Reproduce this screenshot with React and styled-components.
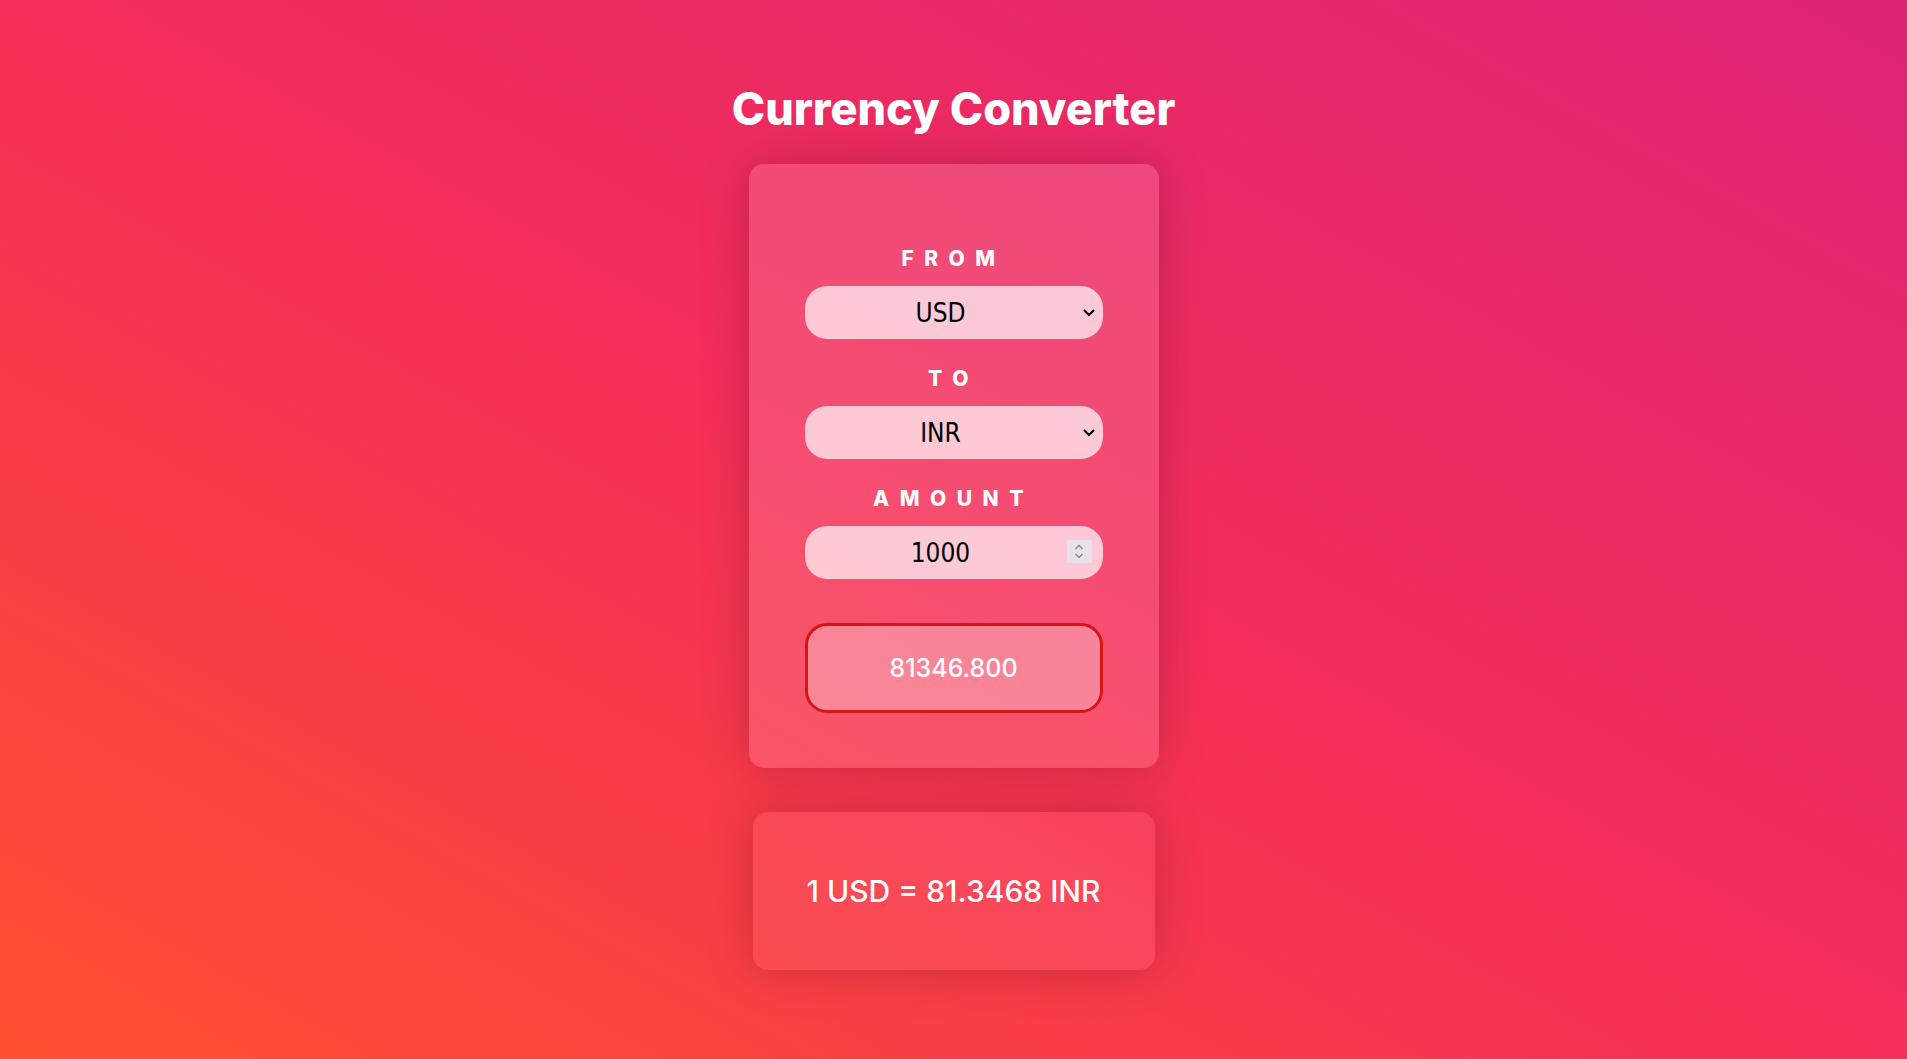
import React, { useState } from 'react';
import styled, { createGlobalStyle } from 'styled-components';

const GlobalStyle = createGlobalStyle`
    * { box-sizing: border-box; }
    html, body { margin: 0; padding: 0; }
    body { font-family: Inter, "Noto Sans", sans-serif; }
`;

const rates = { USD: 1, INR: 81.3468, EUR: 0.9712, GBP: 0.8341, JPY: 144.62 };

const Page = styled.div`
    min-height: 100vh;
    display: flex;
    flex-direction: column;
    align-items: center;
    padding-top: 82px;
    background: linear-gradient(to top right, #ff4f2f, #f52e58 50%, #dd2476);
`;

const Title = styled.h1`
    margin: 0 0 28px;
    font-size: 45px;
    line-height: 54px;
    font-weight: 800;
    color: #fff;
`;

const Card = styled.div`
    width: 410px;
    padding: 83px 0 55px;
    display: flex;
    flex-direction: column;
    align-items: center;
    background: rgba(255, 255, 255, 0.15);
    border-radius: 15px;
    box-shadow: 0 0 50px rgba(0, 0, 0, 0.2);
`;

const Fields = styled.div`
    display: flex;
    flex-direction: column;
    gap: 28px;
`;

const Field = styled.div`
    display: flex;
    flex-direction: column;
    align-items: center;
    gap: 15px;
`;

const Label = styled.label`
    font-size: 21px;
    line-height: 24px;
    font-weight: 800;
    letter-spacing: 10.5px;
    color: #fff;
`;

const Control = styled.div`
    position: relative;
    width: 298px;
    height: 53px;
`;

const fieldBase = `
    width: 100%;
    height: 100%;
    border: 0;
    outline: none;
    border-radius: 22px;
    background: rgba(255, 255, 255, 0.7);
    color: #000;
    font-family: "DejaVu Sans Condensed", "DejaVu Sans", sans-serif;
    font-size: 26px;
    text-align: center;
    padding: 0 26px 0 0;
`;

const Select = styled.select`
    ${fieldBase}
    appearance: none;
    -webkit-appearance: none;
    text-align-last: center;
`;

const NumberInput = styled.input`
    ${fieldBase}
    -moz-appearance: textfield;
    &::-webkit-inner-spin-button,
    &::-webkit-outer-spin-button {
        -webkit-appearance: none;
        margin: 0;
    }
`;

const Chevron = styled.svg`
    position: absolute;
    right: 7px;
    top: 50%;
    transform: translateY(-50%);
    pointer-events: none;
`;

const Spinner = styled.div`
    position: absolute;
    right: 11px;
    top: 14px;
    width: 25px;
    height: 23px;
    background: #e6e2ea;
    display: flex;
    flex-direction: column;
    align-items: center;
    justify-content: center;
    gap: 3px;
    pointer-events: none;
`;

const Result = styled.div`
    margin-top: 44px;
    width: 298px;
    height: 90px;
    border: 3px solid #d41616;
    border-radius: 22px;
    background: rgba(255, 255, 255, 0.3);
    display: flex;
    align-items: center;
    justify-content: center;
    color: #fff;
    font-size: 25px;
    font-weight: 500;
`;

const RateCard = styled.div`
    margin-top: 44px;
    width: 402px;
    height: 158px;
    border-radius: 15px;
    background: rgba(255, 255, 255, 0.08);
    box-shadow: 0 0 50px rgba(0, 0, 0, 0.2);
    display: flex;
    align-items: center;
    justify-content: center;
    color: #fff;
    font-size: 30px;
    font-weight: 500;
`;

const Arrow = () => (
    <Chevron width="14" height="10" viewBox="0 0 14 10">
        <polyline points="2,2 7,7 12,2" fill="none" stroke="#000" strokeWidth="2" />
    </Chevron>
);

const CurrencySelect = ({ value, onChange }) => (
    <Control>
        <Select value={value} onChange={(e) => onChange(e.target.value)}>
            {Object.keys(rates).map((c) => <option key={c} value={c}>{c}</option>)}
        </Select>
        <Arrow />
    </Control>
);

const App = () => {
    const [from, setFrom] = useState('USD');
    const [to, setTo] = useState('INR');
    const [amount, setAmount] = useState(1000);

    const rate = rates[to] / rates[from];

    return (
        <>
            <GlobalStyle />
            <Page>
                <Title>Currency Converter</Title>
                <Card>
                    <Fields>
                        <Field>
                            <Label>FROM</Label>
                            <CurrencySelect value={from} onChange={setFrom} />
                        </Field>
                        <Field>
                            <Label>TO</Label>
                            <CurrencySelect value={to} onChange={setTo} />
                        </Field>
                        <Field>
                            <Label>AMOUNT</Label>
                            <Control>
                                <NumberInput type="number" value={amount} onChange={(e) => setAmount(e.target.value)} />
                                <Spinner>
                                    <svg width="10" height="6" viewBox="0 0 10 6">
                                        <polyline points="1.5,5 5,1.5 8.5,5" fill="none" stroke="#8b8794" strokeWidth="1.5" />
                                    </svg>
                                    <svg width="10" height="6" viewBox="0 0 10 6">
                                        <polyline points="1.5,1 5,4.5 8.5,1" fill="none" stroke="#8b8794" strokeWidth="1.5" />
                                    </svg>
                                </Spinner>
                            </Control>
                        </Field>
                    </Fields>
                    <Result>{(amount * rate).toFixed(3)}</Result>
                </Card>
                <RateCard>1 {from} = {rate.toFixed(4)} {to}</RateCard>
            </Page>
        </>
    );
};

export default App;
